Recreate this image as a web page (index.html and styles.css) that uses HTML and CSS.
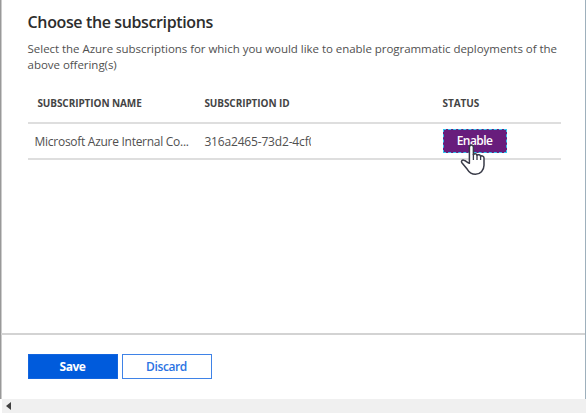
FILE: index.html
```html
<!DOCTYPE html>
<html lang="en">
<head>
<meta charset="utf-8">
<title>Choose the subscriptions</title>
<link rel="stylesheet" href="styles.css">
</head>
<body>
<div class="blade">
  <main class="content">
    <h1 class="title"><span>Choose the subscriptions</span></h1>
    <p class="intro"><span>Select the Azure subscriptions for which you would like to enable programmatic deployments of the</span><br><span>above offering(s)</span></p>
    <div class="table">
      <div class="row head"><span class="name">SUBSCRIPTION NAME</span><span>SUBSCRIPTION ID</span><span>STATUS</span></div>
      <div class="row item">
        <span class="name">Microsoft Azure Internal Co...</span>
        <span class="clip">316a2465-73d2-4cf0</span>
        <button class="enable"><span>Enable</span>
          <svg class="cursor" width="28" height="34" viewBox="0 0 28 34"><path d="M9.4 20V4.2c0-3 4-3 4 0v7.5c.5-1.5 3.5-1.3 3.6.5 1-1 3.4-.6 3.6 1.1 1.2-1 3.4-.2 3.4 1.8v7.2c0 5-3.8 9-8.6 9-3.8 0-6.3-2-8.1-5L1.9 19.8c-1.2-1.7.2-3 1.9-2.6 2.4.5 3.4 2.5 5.6 3.1z" fill="#fff" stroke="#393b48" stroke-width="1.5" stroke-linejoin="round"/><path d="M13.4 11v6M17 12v5M20.6 13v4" fill="none" stroke="#393b48" stroke-width="1.3"/></svg>
        </button>
      </div>
    </div>
  </main>
  <footer class="actions"><button class="btn save">Save</button><button class="btn discard">Discard</button></footer>
</div>
<div class="scrollbar"><svg width="5" height="8" viewBox="0 0 5 8"><path d="M5 0v8L0 4z" fill="#404040"/></svg></div>
</body>
</html>
```
FILE: styles.css
```css
* { box-sizing: border-box; }
body { margin: 0; width: 586px; height: 414px; overflow: hidden; background: #fff; font-family: "Open Sans", "Noto Sans", sans-serif; color: #505050; }
.blade { height: 399px; display: flex; flex-direction: column; border-left: 1px solid #999; border-right: 1px solid #9eb0bc; box-shadow: inset 1px 0 #ccc; }
.content { flex: 1; padding: 11px 24px 0 26.6px; }
.title { margin: 0; height: 30px; font-size: 16px; line-height: 23px; font-weight: 600; color: #2d2d2d; white-space: nowrap; letter-spacing: -0.38px; }
.intro { margin: 0; height: 42px; font-size: 11.5px; line-height: 16px; white-space: nowrap; letter-spacing: -0.04px; }
.row { display: grid; grid-template-columns: 176.8px 238.2px 1fr; align-items: center; border-bottom: 2px solid #dedede; white-space: nowrap; }
.head { height: 41px; font-size: 10px; font-weight: 700; letter-spacing: -0.08px; color: #444; }
.head .name { padding-left: 9.8px; }
.item { height: 36px; font-size: 12px; }
.item .name { padding-left: 7px; letter-spacing: -0.28px; }
.clip { width: 107px; overflow: hidden; letter-spacing: -0.17px; }
.enable { position: relative; width: 64px; height: 24px; padding: 0; border: 1px solid #681d7c; outline: 1px dashed #35c5ef; outline-offset: -1px; background: #681d7c; color: #fff; font: 600 12px/22px "Open Sans", sans-serif; letter-spacing: -0.55px; }
.cursor { position: absolute; left: 16px; top: 13px; }
.actions { height: 66px; display: flex; gap: 4px; padding: 19px 0 0 26.5px; border-top: 2px solid #d3d3d3; }
.btn { width: 90px; height: 25px; padding: 0; border: 1px solid #1265df; font: 600 12px/24px "Open Sans", sans-serif; letter-spacing: -0.25px; }
.save { background: #005bdc; color: #fff; font-weight: 700; letter-spacing: -0.5px; }
.discard { background: #fff; color: #2b73e3; border: 1px solid #3f83e7; letter-spacing: -0.4px; }
.scrollbar { height: 14px; margin-left: 2px; background: #f0f0f0; display: flex; align-items: center; padding-left: 4px; }
```
